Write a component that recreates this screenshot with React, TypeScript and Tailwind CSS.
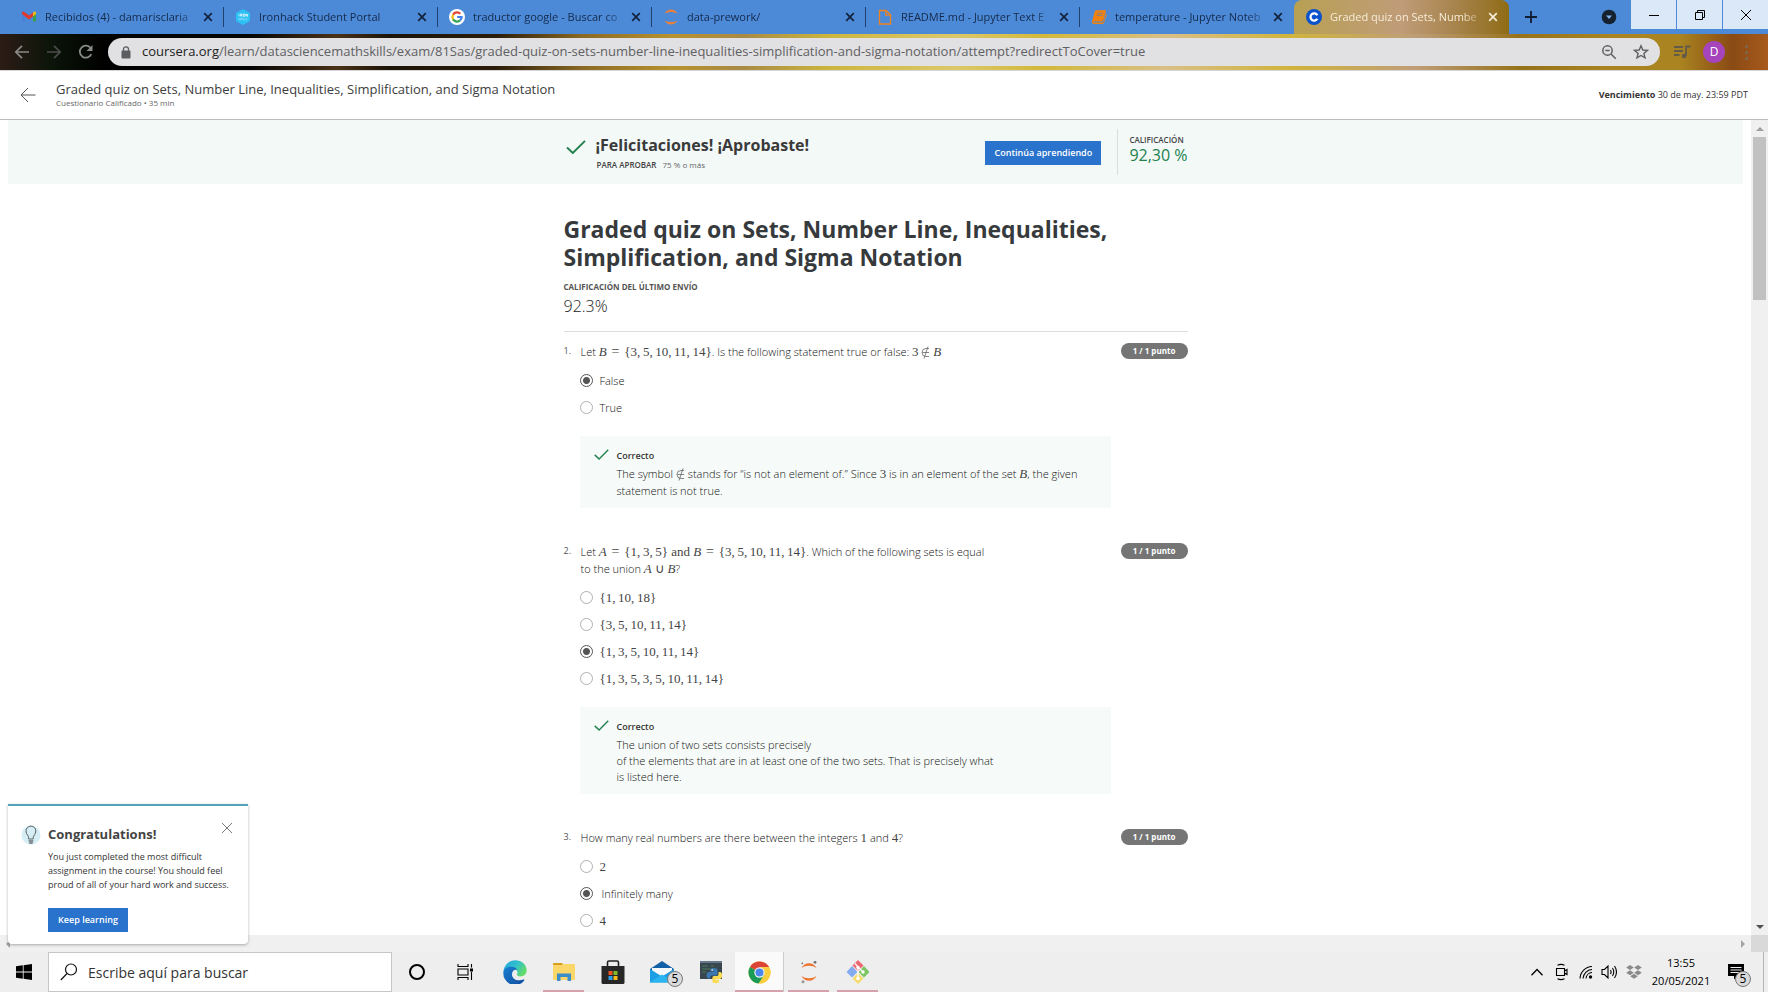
import React from "react";

type TabInfo = { title: string; icon: React.ReactNode };

const Close = ({ className = "" }: { className?: string }) => (
  <svg viewBox="0 0 10 10" className={className} fill="none" stroke="currentColor" strokeWidth="1.7" aria-hidden="true">
    <path d="M1.2 1.2l7.6 7.6M8.8 1.2L1.2 8.8" />
  </svg>
);

const GmailIcon = () => (
  <svg viewBox="0 0 16 16" className="size-4 shrink-0" aria-hidden="true">
    <path d="M1 4v8.5h3V7z" fill="#4a80d8" />
    <path d="M12 7v5.5h3V4z" fill="#37a04c" />
    <path d="M12 3.6l1.4-1q1.6-.4 1.6 1.4V5l-3 2.4z" fill="#f2bb18" />
    <path d="M1 5V3.8q.2-1.8 2-1L8 6.5l4-2.9v3.8l-4 3-4-3z" fill="#e0392f" />
  </svg>
);

const IronhackIcon = () => (
  <svg viewBox="0 0 16 16" className="size-4 shrink-0" aria-hidden="true">
    <path d="M8 0l7 4v8l-7 4-7-4V4z" fill="#2dc0f4" />
    <path d="M4 5v2.4M5.6 7.4V5h1.5v1.3H5.8l1.3 1.1M8.4 5h1.5v2.4H8.4zM11 7.4V5l1.4 2.4V5" stroke="#fff" strokeWidth=".7" fill="none" />
    <path d="M4 9v2.2M5.4 9v2.2M4 10.1h1.4M6.6 11.2V9h1.3v2.2M9 9v2.2h1.2M11.2 9v2.2M12.4 9l-1.2 1.1 1.2 1.1" stroke="#9be3fb" strokeWidth=".6" fill="none" />
  </svg>
);

const GoogleIcon = () => (
  <svg viewBox="0 0 16 16" className="size-4 shrink-0" aria-hidden="true">
    <circle cx="8" cy="8" r="8" fill="#fff" />
    <g fill="none" strokeWidth="2.2">
      <path d="M4.1 5.6A4.6 4.6 0 0 1 11.3 4.8" stroke="#e34133" />
      <path d="M4.1 10.4a4.7 4.7 0 0 1 0-4.8" stroke="#f5b912" />
      <path d="M11.2 11.3a4.6 4.6 0 0 1-7.1-.9" stroke="#32a350" />
      <path d="M8.2 8h4.4a4.6 4.6 0 0 1-1.4 3.3" stroke="#4081ec" />
    </g>
  </svg>
);

const JupyterTabIcon = () => (
  <svg viewBox="0 0 16 16" className="size-4 shrink-0" aria-hidden="true">
    <path d="M1.5 4.6Q4 .6 8 .6t6.500 4Q11.500 3 8 3T1.500 4.600z" fill="#e8803c" />
    <path d="M1.500 11.400Q4 15.400 8 15.400t6.500-4Q11.500 13 8 13t-6.500-1.600z" fill="#e8803c" />
  </svg>
);

const FileIcon = () => (
  <svg viewBox="0 0 16 16" className="size-4 shrink-0" fill="none" stroke="#f0831e" strokeWidth="1.300" aria-hidden="true">
    <path d="M2.500 1.500h6.500l4.500 4.300v9.200h-11z" />
    <path d="M8.800 1.500v4.600h4.700" />
  </svg>
);

const BookIcon = () => (
  <svg viewBox="0 0 16 16" className="size-4 shrink-0" aria-hidden="true">
    <path d="M5 1.200h9.200q1 .1.700 1.200l-2.600 9q-.3 1-1.300 1H3.200q-1 .2-.9 1h9.200q1 0 1.300-1l2.400-7.600q.6.500.4 1.400l-2.400 7.400q-.4 1.300-1.700 1.300H2.500Q.6 14.600 1 12.400L3.700 2.600Q4 1.300 5 1.200z" fill="#f2820f" />
    <path d="M6.300 4.300h5.600M5.700 6.400h5.600" stroke="#6f7f9c" strokeWidth=".8" />
  </svg>
);

const CourseraIcon = () => (
  <svg viewBox="0 0 16 16" className="size-4 shrink-0" aria-hidden="true">
    <circle cx="8" cy="8" r="8" fill="#0a53cc" />
    <path d="M11.300 9.700A3.600 3.600 0 1 1 11.300 6.300" fill="none" stroke="#fff" strokeWidth="2.300" />
  </svg>
);

const tabs: TabInfo[] = [
  { title: "Recibidos (4) - damarisclaria", icon: <GmailIcon /> },
  { title: "Ironhack Student Portal", icon: <IronhackIcon /> },
  { title: "traductor google - Buscar co", icon: <GoogleIcon /> },
  { title: "data-prework/", icon: <JupyterTabIcon /> },
  { title: "README.md - Jupyter Text E", icon: <FileIcon /> },
  { title: "temperature - Jupyter Noteb", icon: <BookIcon /> },
];

const TabTitle = ({ children }: { children: string }) => (
  <p className="text-[11px] leading-4 whitespace-nowrap [mask-image:linear-gradient(to_right,#000_132px,rgba(0,0,0,0.3)_148px)]">
    {children}
  </p>
);

const TabStrip = () => (
  <div className="flex h-[34px] bg-[#4c8ad8] pl-[10px] text-[#15294a]">
    {tabs.map((t, i) => (
      <div key={t.title} className="flex w-[214px] min-w-0 items-center pl-[11px]">
        {t.icon}
        <div className="ml-2 min-w-0 flex-1">
          <TabTitle>{t.title}</TabTitle>
        </div>
        <button aria-label="Cerrar pestaña" className="mr-[10px] ml-2 text-[#14233c]">
          <Close className="size-[10px]" />
        </button>
        <span className={i < 5 ? "h-5 w-px bg-[#20406e]" : "h-5 w-px"} />
      </div>
    ))}
    <div className="flex w-[215px] min-w-0 items-center rounded-t-lg bg-linear-to-r from-[#b8a052] via-[#c09c78] to-[#8f6c10] pl-3 text-[#f6ecd8]">
      <CourseraIcon />
      <div className="ml-2 min-w-0 flex-1">
        <TabTitle>Graded quiz on Sets, Numbe</TabTitle>
      </div>
      <button aria-label="Cerrar pestaña" className="mr-[11px] ml-2">
        <Close className="size-[10px]" />
      </button>
    </div>
    <button aria-label="Nueva pestaña" className="ml-4 text-[#101c30]">
      <svg viewBox="0 0 12 12" className="size-3" stroke="currentColor" strokeWidth="1.800" aria-hidden="true">
        <path d="M6 0v12M0 6h12" />
      </svg>
    </button>
    <button aria-label="Buscar pestañas" className="ml-auto mr-[14px]">
      <svg viewBox="0 0 16 16" className="size-4" aria-hidden="true">
        <circle cx="8" cy="8" r="7.300" fill="#15212f" />
        <path d="M5 6.500h6L8 10z" fill="#7fb0ea" />
      </svg>
    </button>
    <div className="flex h-[29px] gap-px text-black">
      <button aria-label="Minimizar" className="flex w-[45px] items-center justify-center bg-[#dbe8f7]">
        <svg viewBox="0 0 12 12" className="size-3" stroke="currentColor" aria-hidden="true"><path d="M1 6.500h10" /></svg>
      </button>
      <button aria-label="Restaurar" className="flex w-[45px] items-center justify-center bg-[#dbe8f7]">
        <svg viewBox="0 0 12 12" className="size-3" fill="none" stroke="currentColor" aria-hidden="true">
          <path d="M1.500 3.500h7v7h-7zM3.500 3.500v-2h7v7h-2" />
        </svg>
      </button>
      <button aria-label="Cerrar" className="flex w-[45px] items-center justify-center bg-[#dbe8f7]">
        <svg viewBox="0 0 12 12" className="size-3" stroke="currentColor" aria-hidden="true"><path d="M1 1l10 10M11 1L1 11" /></svg>
      </button>
    </div>
  </div>
);

const Toolbar = () => (
  <div className="flex h-[37px] items-center border-b border-[#d8d6d4] bg-[linear-gradient(90deg,#2c1c16_0%,#0a1408_3%,#000_6%,#030303_14%,#4a3218_19%,#1c1408_22%,#2a1c0a_28%,#8b6a24_33%,#b8922e_38%,#a88a44_42%,#cdb63e_47%,#dcc86a_54%,#d2b93a_59%,#d9bf86_66%,#d0b43c_73%,#bf9e78_80%,#96721a_86%,#a98420_91%,#a98420_95%,#8a4a14_98%,#a85a1c_100%)] text-[#8a8a88]">
    <button aria-label="Atrás" className="ml-[14px]">
      <svg viewBox="0 0 16 16" className="size-4" fill="none" stroke="currentColor" strokeWidth="1.700" aria-hidden="true">
        <path d="M15 8H2M8 1.800L1.800 8 8 14.200" />
      </svg>
    </button>
    <button aria-label="Adelante" className="ml-4 text-[#4c4c4c]">
      <svg viewBox="0 0 16 16" className="size-4" fill="none" stroke="currentColor" strokeWidth="1.700" aria-hidden="true">
        <path d="M1 8h13M8 1.800L14.200 8 8 14.200" />
      </svg>
    </button>
    <button aria-label="Recargar" className="ml-4">
      <svg viewBox="0 0 16 16" className="size-4" fill="none" stroke="currentColor" strokeWidth="1.800" aria-hidden="true">
        <path d="M13.300 10.200A6 6 0 1 1 12.600 4" />
        <path d="M14.500 1v6h-6z" fill="currentColor" stroke="none" />
      </svg>
    </button>
    <div className="ml-[14px] flex h-7 flex-1 items-center rounded-full bg-[#e1e0e2] pr-[11px] pl-[13px] text-[#5f6062]">
      <svg viewBox="0 0 10 13" className="h-[13px] w-[10px]" aria-hidden="true">
        <rect x=".5" y="4.500" width="9" height="8" rx="1" fill="#5c5d60" />
        <path d="M2.500 5V3.300a2.500 2.500 0 0 1 5 0V5" fill="none" stroke="#5c5d60" strokeWidth="1.300" />
      </svg>
      <p className="ml-[11px] flex-1 overflow-hidden text-[13px] whitespace-nowrap">
        <span className="text-[#222]">coursera.org</span>
        /learn/datasciencemathskills/exam/81Sas/graded-quiz-on-sets-number-line-inequalities-simplification-and-sigma-notation/attempt?redirectToCover=true
      </p>
      <button aria-label="Zoom">
        <svg viewBox="0 0 16 16" className="size-4" fill="none" stroke="currentColor" strokeWidth="1.500" aria-hidden="true">
          <circle cx="6.500" cy="6.500" r="4.700" />
          <path d="M10 10l4.800 4.800M4.300 6.500h4.400" />
        </svg>
      </button>
      <button aria-label="Añadir a marcadores" className="ml-4">
        <svg viewBox="0 0 16 16" className="size-4" fill="none" stroke="currentColor" strokeWidth="1.400" aria-hidden="true">
          <path d="M8 1.800l1.800 4.200 4.600.4-3.500 3 1.100 4.500L8 11.500l-4 2.400 1.100-4.500-3.500-3 4.600-.4z" />
        </svg>
      </button>
    </div>
    <button aria-label="Control multimedia" className="ml-[13px] text-[#635a48]">
      <svg viewBox="0 0 18 16" className="h-4 w-[18px]" fill="none" stroke="currentColor" strokeWidth="1.800" aria-hidden="true">
        <path d="M1 3h9M1 7h9M1 11h5.500M13 12V2.500h4.500" />
        <circle cx="11" cy="12" r="2.200" fill="currentColor" stroke="none" />
      </svg>
    </button>
    <button aria-label="Perfil" className="ml-3 flex size-[22px] items-center justify-center rounded-full bg-[#a544bb] text-[12px] text-white">
      D
    </button>
    <button aria-label="Menú" className="mr-5 ml-5 flex flex-col gap-[3px]">
      <span className="size-[3px] rounded-full bg-[#7a6a50]" />
      <span className="size-[3px] rounded-full bg-[#7a6a50]" />
      <span className="size-[3px] rounded-full bg-[#7a6a50]" />
    </button>
  </div>
);

const CourseHeader = () => (
  <header className="flex h-[49px] items-center border-b border-[#bcbcbc] bg-white pr-5 pl-5">
    <a href="#volver" aria-label="Volver" className="text-[#555]">
      <svg viewBox="0 0 16 16" className="size-4" fill="none" stroke="currentColor" strokeWidth="1" aria-hidden="true">
        <path d="M15.500 8H1M8 1L1 8l7 7" />
      </svg>
    </a>
    <div className="ml-5 flex-1 pb-px">
      <h2 className="text-[13px] leading-4 text-[#3d3d3d]">
        Graded quiz on Sets, Number Line, Inequalities, Simplification, and Sigma Notation
      </h2>
      <p className="text-[8px] leading-[11px] text-[#666]">Cuestionario Calificado • 35 min</p>
    </div>
    <p className="text-[9px] text-[#333]">
      <b className="font-bold">Vencimiento</b> 30 de may. 23:59 PDT
    </p>
  </header>
);

const Check = ({ className = "" }: { className?: string }) => (
  <svg viewBox="0 0 20 14" className={className} fill="none" stroke="#22814f" strokeWidth="1.900" aria-hidden="true">
    <path d="M1 7.500L6.800 13 19 .8" />
  </svg>
);

const Banner = () => (
  <section className="mx-2 flex h-16 justify-center bg-[#f3f9f7]">
    <div className="flex w-[624px] items-center">
      <Check className="mt-[-10px] ml-[2px] h-[14px] w-5" />
      <div className="ml-[10px] flex-1 pt-[2px]">
        <h2 className="text-[16px] leading-6 font-bold text-[#3a3a3a]">¡Felicitaciones! ¡Aprobaste!</h2>
        <p className="pl-px text-[8px] leading-4 text-[#666]">
          <b className="mr-1 font-semibold text-[#444]">PARA APROBAR</b> 75 % o más
        </p>
      </div>
      <button className="mt-[2px] h-6 w-[116px] bg-[#2a73cc] text-[9px] font-semibold text-white">Continúa aprendiendo</button>
      <div className="ml-4 flex h-[46px] flex-col justify-center border-l border-[#d9dedc] pb-[6px] pl-[11px]">
        <span className="text-[8px] leading-3 font-semibold text-[#444]">CALIFICACIÓN</span>
        <span className="text-[16px] leading-[18px] text-[#22814f]">92,30 %</span>
      </div>
    </div>
  </section>
);

const M = ({ children, it = false }: { children: React.ReactNode; it?: boolean }) => (
  <span className={it ? "font-['Liberation_Serif',serif] text-[13px] leading-none font-normal text-[#444] italic" : "font-['Liberation_Serif',serif] text-[13px] leading-none font-normal text-[#444]"}>
    {children}
  </span>
);

const Eq = () => <span className="mx-[2px] font-['Liberation_Serif',serif] text-[14px] leading-none font-normal text-[#444]">=</span>;

const NotIn = () => (
  <svg viewBox="0 0 9 13" className="inline h-[13px] w-[9px] align-[-3px]" fill="none" stroke="#666" strokeWidth=".8" role="img" aria-label="∉">
    <path d="M8 2.500H5A3.800 3.800 0 0 0 5 10.500h3M1.400 6.500H8M7 .5L3 12.500" />
  </svg>
);

const setOf = (...n: number[]) => "{" + n.join(",\u2009") + "}";

type Option = { label: React.ReactNode; checked?: boolean };

const Question = ({ n, text, options, children }: { n: number; text: React.ReactNode; options: Option[]; children?: React.ReactNode }) => (
  <li className="flex items-start">
    <span className="w-4 shrink-0 text-[9px] leading-4 text-[#555]">{n}.</span>
    <fieldset className="min-w-0 flex-1">
      <legend className="pl-px text-[11px] leading-[17px] font-light whitespace-nowrap text-[#111]">{text}</legend>
      <div className="mt-[7px] mb-[15px]">
        {options.map((o, i) => (
          <label key={i} className="flex h-[27px] items-center gap-[7px] text-[11px] font-light text-[#111]">
            <input
              type="radio"
              name={"q" + n}
              defaultChecked={o.checked}
              className="size-[13px] appearance-none rounded-full border border-[#b0b0b0] bg-white checked:border-[#555] checked:bg-[radial-gradient(circle,#555_3px,transparent_4px)]"
            />
            <span className="pt-px">{o.label}</span>
          </label>
        ))}
      </div>
      {children}
    </fieldset>
    <span className="ml-[10px] flex h-4 w-[67px] items-center justify-center rounded-full bg-[#757575] text-[8px] font-bold text-white">
      1 / 1 punto
    </span>
  </li>
);

const Feedback = ({ children, dense = false }: { children: React.ReactNode; dense?: boolean }) => (
  <div className="flex bg-[#f6fbf9] pt-3 pb-[9px] pl-[14px] whitespace-nowrap">
    <Check className="mt-px h-[11px] w-[15px] shrink-0" />
    <div className="ml-2 text-[#111]">
      <h3 className="text-[9px] leading-4 font-semibold text-[#333]">Correcto</h3>
      <p className={dense ? "mt-[2px] text-[11px] leading-4 font-light" : "mt-px text-[11px] leading-[17px] font-light"}>{children}</p>
    </div>
  </div>
);

const Quiz = () => (
  <main className="mx-auto w-[624px] pt-[31px]">
    <h1 className="text-[23px] leading-7 font-bold text-[#373a3c]">
      Graded quiz on Sets, Number Line, Inequalities, Simplification, and Sigma Notation
    </h1>
    <p className="mt-2 text-[8px] leading-4 font-bold text-[#555]">CALIFICACIÓN DEL ÚLTIMO ENVÍO</p>
    <p className="mt-px text-[16px] leading-5 font-light text-[#222]">92.3%</p>
    <hr className="mt-[15px] border-[#dedede]" />
    <ol className="mt-[11px] flex flex-col gap-[35px]">
      <Question
        n={1}
        text={
          <>
            Let <M it>B</M> <Eq /> <M>{setOf(3, 5, 10, 11, 14)}</M>. Is the following statement true or false: <M>3</M> <NotIn /> <M it>B</M>
          </>
        }
        options={[{ label: "False", checked: true }, { label: "True" }]}
      >
        <Feedback>
          The symbol <NotIn /> stands for “is not an element of.” Since <M>3</M> is in an element of the set <M it>B</M>, the given
          <br />
          statement is not true.
        </Feedback>
      </Question>
      <Question
        n={2}
        text={
          <>
            Let <M it>A</M> <Eq /> <M>{setOf(1, 3, 5)} and </M><M it>B</M> <Eq /> <M>{setOf(3, 5, 10, 11, 14)}</M>. Which of the following sets is equal
            <br />
            to the union <M it>A</M> <M>∪</M> <M it>B</M>?
          </>
        }
        options={[
          { label: <M>{setOf(1, 10, 18)}</M> },
          { label: <M>{setOf(3, 5, 10, 11, 14)}</M> },
          { label: <M>{setOf(1, 3, 5, 10, 11, 14)}</M>, checked: true },
          { label: <M>{setOf(1, 3, 5, 3, 5, 10, 11, 14)}</M> },
        ]}
      >
        <Feedback dense>
          The union of two sets consists precisely
          <br />
          of the elements that are in at least one of the two sets. That is precisely what
          <br />
          is listed here.
        </Feedback>
      </Question>
      <Question
        n={3}
        text={
          <>
            How many real numbers are there between the integers <M>1</M> and <M>4</M>?
          </>
        }
        options={[{ label: <M>2</M> }, { label: <span className="ml-[2px]">Infinitely many</span>, checked: true }, { label: <M>4</M> }]}
      />
    </ol>
  </main>
);

const Arrow = ({ d, className }: { d: string; className: string }) => (
  <svg viewBox="0 0 8 8" className={className} aria-hidden="true">
    <path d={d} fill="currentColor" />
  </svg>
);

const VScroll = () => (
  <div className="flex w-[17px] flex-col items-center bg-[#f0f0f0]">
    <div className="flex h-[17px] items-center text-[#a0a0a0]">
      <Arrow d="M0 6l4-4 4 4z" className="size-2" />
    </div>
    <div className="h-[20%] w-[13px] bg-[#c1c1c1]" />
    <div className="mt-auto flex h-[17px] items-center text-[#505050]">
      <Arrow d="M0 2l4 4 4-4z" className="size-2" />
    </div>
  </div>
);

const HScroll = () => (
  <div className="flex h-[17px] items-center bg-[#f0f0f0] text-[#a3a3a3]">
    <Arrow d="M6 0L2 4l4 4z" className="ml-1 size-2" />
    <Arrow d="M2 0l4 4-4 4z" className="mr-1 ml-auto size-2" />
    <span className="size-[17px] bg-[#d9d9d9]" />
  </div>
);

const Popup = () => (
  <aside className="absolute bottom-2 left-2 flex w-[240px] rounded-b-sm border-t-2 border-[#52a5bb] bg-white pt-[18px] pr-3 pb-3 pl-[13px] shadow-[0_1px_3px_rgba(0,0,0,0.3)]">
    <svg viewBox="0 0 20 20" className="mt-px size-5 shrink-0" fill="none" aria-hidden="true">
      <circle cx="10" cy="10" r="9.500" fill="#d5edf5" />
      <path d="M7.600 14v-1.500C7.600 10.500 5 9.500 5 6a4.900 4.900 0 0 1 9.800 0c0 3.500-2.600 4.500-2.600 6.500V14z" stroke="#4c5254" strokeWidth=".9" />
      <path d="M7.600 16h4.700M8.200 18h3.500" stroke="#333" strokeWidth="1.200" />
    </svg>
    <div className="ml-[7px]">
      <h2 className="text-[13px] leading-5 font-bold text-[#444]">Congratulations!</h2>
      <p className="mt-[6px] text-[9px] leading-[14px] whitespace-nowrap text-[#333]">
        You just completed the most difficult
        <br />
        assignment in the course! You should feel
        <br />
        proud of all of your hard work and success.
      </p>
      <button className="mt-4 h-6 w-20 bg-[#2a73cc] pb-px text-[9px] font-semibold text-white">Keep learning</button>
    </div>
    <button aria-label="Cerrar aviso" className="absolute top-[17px] right-4 text-[#555]">
      <svg viewBox="0 0 10 10" className="size-[10px]" stroke="currentColor" strokeWidth=".8" aria-hidden="true">
        <path d="M0 0l10 10M10 0L0 10" />
      </svg>
    </button>
  </aside>
);

const Badge = () => (
  <span className="absolute right-[3px] bottom-[5px] flex size-4 items-center justify-center rounded-full border border-[#777] bg-[#d9dbdc] text-[12px] leading-none text-black">
    5
  </span>
);

const AppButton = ({ label, line = "", active = false, children }: { label: string; line?: string; active?: boolean; children: React.ReactNode }) => (
  <button
    aria-label={label}
    className={active ? "relative flex w-[49px] items-center justify-center border-r border-[#ccc] bg-[#fafafa]" : "relative flex w-[49px] items-center justify-center"}
  >
    {children}
    {line && <span className={line} />}
  </button>
);

const Taskbar = () => (
  <footer className="flex h-10 bg-[#eeeeee] text-black">
    <button aria-label="Inicio" className="flex w-12 items-center justify-center">
      <svg viewBox="0 0 16 16" className="size-4" aria-hidden="true">
        <path d="M0 2.300l6.800-1v6.300H0zM7.600 1.200L16 0v7.600H7.600zM0 8.400h6.800v6.300L0 13.700zM7.600 8.400H16V16l-8.400-1.200z" />
      </svg>
    </button>
    <div className="flex w-[344px] items-center border border-[#c6c6c6] bg-white pl-[11px]">
      <svg viewBox="0 0 18 18" className="size-[18px]" fill="none" stroke="#111" strokeWidth="1.200" aria-hidden="true">
        <circle cx="11" cy="6.500" r="5.500" />
        <path d="M7 10.500L.8 17" />
      </svg>
      <input
        aria-label="Buscar"
        placeholder="Escribe aquí para buscar"
        className="ml-[10px] min-w-0 flex-1 text-[14px] outline-none placeholder:text-[#333]"
      />
    </div>
    <AppButton label="Cortana">
      <span className="size-4 rounded-full border-2 border-black" />
    </AppButton>
    <AppButton label="Vista de tareas">
      <svg viewBox="0 0 17 16" className="h-4 w-[17px]" fill="none" stroke="#000" strokeWidth="1.100" aria-hidden="true">
        <path d="M1 0v2.500h10V0M1 5h10v6H1zM1 16v-2.500h10V16M14.500 0v3.500M14.500 8v8" />
        <path d="M13 4.500h3v3h-3z" fill="#000" stroke="none" />
      </svg>
    </AppButton>
    <AppButton label="Edge">
      <svg viewBox="0 0 24 24" className="size-6" aria-hidden="true">
        <defs>
          <linearGradient id="edgeTop" x1="0" y1="0" x2="1" y2=".5">
            <stop offset="0" stopColor="#2aa5dd" />
            <stop offset=".55" stopColor="#30bfcf" />
            <stop offset="1" stopColor="#62dc6a" />
          </linearGradient>
          <linearGradient id="edgeLow" x1="0" y1="0" x2="1" y2="1">
            <stop offset="0" stopColor="#1b80d2" />
            <stop offset="1" stopColor="#0f4a9c" />
          </linearGradient>
        </defs>
        <path d="M.5 11.500C1 5 6 .3 12 .3c7 0 11.700 5 11.700 9.900 0 3.900-2.900 6.200-6.200 6.200-2.800 0-4-1-3.500-2 1-1.500.8-5.200-3.700-6C5.500 7.500 1.500 9 .5 11.500z" fill="url(#edgeTop)" />
        <path d="M.4 12c.6-4 4.800-6 9-5.200 2.400.4 4 1.500 4.600 3.200-3-.8-5 1.500-5 4.400 0 4.300 5 7.500 11.500 5.200.8-.3 1.200.3.800.9A11.700 11.700 0 0 1 .4 12z" fill="url(#edgeLow)" />
      </svg>
    </AppButton>
    <AppButton label="Explorador de archivos" line="absolute inset-x-1 bottom-0 h-[2px] bg-[#d3a2ad]">
      <svg viewBox="0 0 22 20" className="h-5 w-[22px]" aria-hidden="true">
        <path d="M0 2q0-1 1-1h8l1.500 2H0z" fill="#d89e1e" />
        <path d="M0 3h9l1-1h11q1 0 1 1v15H0z" fill="#fbd669" />
        <path d="M4 11.500h14v7.500h-3.500v-4h-7v4H4z" fill="#3d8dcb" />
      </svg>
    </AppButton>
    <AppButton label="Microsoft Store">
      <svg viewBox="0 0 24 24" className="size-6" aria-hidden="true">
        <path d="M6.500 6V2.500q0-1.500 1.500-1.500h8q1.500 0 1.500 1.500V6" fill="none" stroke="#202020" strokeWidth="1.600" />
        <path d="M.5 6h23v16.500q0 1.500-1.500 1.500H2q-1.500 0-1.500-1.500z" fill="#272727" />
        <path d="M7.500 11h4v4h-4z" fill="#f05223" />
        <path d="M12.500 11h4v4h-4z" fill="#80ba28" />
        <path d="M7.500 16h4v4h-4z" fill="#2ba0e8" />
        <path d="M12.500 16h4v4h-4z" fill="#fab917" />
      </svg>
    </AppButton>
    <AppButton label="Correo">
      <svg viewBox="0 0 24 24" className="size-6" aria-hidden="true">
        <path d="M0 9L12 1l12 8v5H0z" fill="#1260a8" />
        <path d="M2 8h20v5l-10 5-10-5z" fill="#f6f9fb" />
        <path d="M0 9l12 7.500L24 9v13.500H0z" fill="#1a9fe4" />
        <path d="M0 22.500l12-8 12 8z" fill="#2ab5f0" />
      </svg>
      <Badge />
    </AppButton>
    <AppButton label="IDLE">
      <svg viewBox="0 0 24 24" className="size-6" aria-hidden="true">
        <path d="M1 1h22v18H1z" fill="#38474f" />
        <path d="M1 1h22v2H1z" fill="#66798a" />
        <path d="M3 6h6M3 9h9M3 12h4M12 6h3" stroke="#4d7a58" strokeWidth="1" />
        <path d="M11.500 9.500q0-1.500 3.500-1.500t3.500 1.800V14q0 1.500-1.500 1.500h-4q-2 0-2 3h-2q-1.500-.8-1.500-3.500t2-3h5v-.7h-3.500z" fill="#3b78b2" />
        <path d="M19.500 12h2q1.700.5 1.700 3.500T21 19h-4.500v.7H20v1.800q0 1.700-3.300 1.700t-3.300-1.700v-4q0-1.500 1.600-1.500h3q1.500 0 1.500-2z" fill="#fbdb51" />
        <circle cx="13.200" cy="10" r=".8" fill="#fff" />
      </svg>
    </AppButton>
    <AppButton label="Chrome" line="absolute inset-x-0 bottom-0 h-[2px] bg-[#d3a2ad]" active>
      <svg viewBox="0 0 24 24" className="size-[23px]" aria-hidden="true">
        <circle cx="12" cy="12" r="11.500" fill="#fbce3e" />
        <path d="M12 12L2.040 6.250A11.500 11.500 0 0 1 21.960 6.250z" fill="#dc4437" />
        <path d="M12 12L2.040 6.250A11.500 11.500 0 0 0 11 23.450L17 14.500z" fill="#1b9b57" />
        <path d="M12 6.250h9.960A11.500 11.500 0 0 1 12 23.500l5-8.600z" fill="#fbce3e" />
        <circle cx="12" cy="12" r="5.400" fill="#f4f4f4" />
        <circle cx="12" cy="12" r="4.200" fill="#4a86ec" />
      </svg>
    </AppButton>
    <AppButton label="Jupyter" line="absolute inset-x-1 bottom-0 h-[2px] bg-[#d3a2ad]">
      <svg viewBox="0 0 20 24" className="h-6 w-5" aria-hidden="true">
        <path d="M2.500 8Q5 3.200 10 3.200T17.500 8Q14.500 5.800 10 5.800T2.500 8z" fill="#ee7630" />
        <path d="M2.500 16Q5 20.800 10 20.800t7.500-4.800q-3 2.200-7.500 2.200T2.500 16z" fill="#ee7630" />
        <circle cx="16" cy="2.300" r="1.400" fill="#6f7071" />
        <circle cx="3.300" cy="3.300" r=".9" fill="#6f7071" />
        <circle cx="4" cy="21.800" r="1.500" fill="#979797" />
      </svg>
    </AppButton>
    <AppButton label="Git Bash" line="absolute inset-x-1 bottom-0 h-[2px] bg-[#d3a2ad]">
      <svg viewBox="0 0 24 24" className="size-6" aria-hidden="true">
        <path d="M12 0l5.500 5.500L12 11 6.500 5.500z" fill="#ec6a72" />
        <path d="M6 6l5.500 6L6 17.500.5 12z" fill="#84abf0" />
        <path d="M18 6l5.500 6-5.500 5.500L12.500 12z" fill="#7cc564" />
        <path d="M12 13l5.500 5.500L12 24l-5.500-5.500z" fill="#f5dc70" />
        <path d="M9 3.500l3 3.500v12M12 7l5 5" stroke="#fff" strokeWidth="1.200" fill="none" />
        <circle cx="12" cy="7.500" r="1.700" fill="#fff" />
        <circle cx="17" cy="12" r="1.700" fill="#fff" />
        <circle cx="12" cy="18.500" r="1.700" fill="#fff" />
      </svg>
    </AppButton>
    <div className="mr-1 ml-auto flex items-center">
      <svg viewBox="0 0 12 8" className="h-2 w-3" fill="none" stroke="#000" strokeWidth="1.300" aria-hidden="true">
        <path d="M.5 7.200L6 1.500l5.500 5.700" />
      </svg>
      <svg viewBox="0 0 14 18" className="ml-3 h-[18px] w-[14px]" fill="none" stroke="#000" strokeWidth="1.100" aria-hidden="true">
        <path d="M1.500 5.500h8v7h-8zM9.500 8l2.500-1.500v5L9.500 10M2.500 2.200Q6 .5 9.500 2.200M2.500 15.800q3.500 1.700 7 0" />
      </svg>
      <svg viewBox="0 0 14 14" className="ml-[10px] size-[14px]" fill="none" stroke="#000" strokeWidth="1.100" aria-hidden="true">
        <path d="M1 13.500A12.500 12.500 0 0 1 13 1.500M4 13.500a9.500 9.500 0 0 1 9-9M7 13.500a6.500 6.500 0 0 1 6-6" />
        <circle cx="11.500" cy="12" r="1.700" fill="#000" stroke="none" />
      </svg>
      <svg viewBox="0 0 18 16" className="ml-2 h-4 w-[18px]" fill="none" stroke="#000" strokeWidth="1.100" aria-hidden="true">
        <path d="M1 5.500h2.500L7 2v12l-3.500-3.500H1zM9.500 6q1.200 2 0 4M11.500 4q2.500 4 0 8M13.500 2q4 6 0 12" />
      </svg>
      <svg viewBox="0 0 16 14" className="ml-[7px] h-[14px] w-4" fill="#8a8a8a" aria-hidden="true">
        <path d="M4 0l3.800 2.500L4 5 .2 2.500zM12 0l3.800 2.500L12 5 8.200 2.500zM4 5.200l3.800 2.500L4 10.200.2 7.700zM12 5.200l3.800 2.500-3.800 2.500-3.800-2.500zM8 8.800l3.800 2.500L8 13.800l-3.800-2.500z" />
      </svg>
      <p className="ml-2 w-[62px] text-center text-[11px] leading-[18px]">
        13:55
        <br />
        20/05/2021
      </p>
      <button aria-label="Notificaciones" className="relative ml-[14px] flex h-10 w-[38px] border-r border-[#b5b5b5] pt-3 pl-[2px]">
        <svg viewBox="0 0 16 16" className="size-4" aria-hidden="true">
          <path d="M0 0h16v12H9l-3 3.500V12H0z" />
          <path d="M2.500 3.500h11M2.500 6h11M2.500 8.500h11" stroke="#eee" />
        </svg>
        <span className="absolute top-[19px] left-[9px] flex size-4 items-center justify-center rounded-full border border-[#777] bg-[#d9d9d9] text-[12px] leading-none">
          5
        </span>
      </button>
    </div>
  </footer>
);

export default function App() {
  return (
    <div className="flex h-screen flex-col overflow-hidden bg-white font-['Open_Sans','Noto_Sans',sans-serif]">
      <TabStrip />
      <Toolbar />
      <CourseHeader />
      <div className="relative flex min-h-0 flex-1 flex-col">
        <div className="flex min-h-0 flex-1">
          <div className="min-w-0 flex-1 overflow-hidden">
            <Banner />
            <Quiz />
          </div>
          <VScroll />
        </div>
        <HScroll />
        <Popup />
      </div>
      <Taskbar />
    </div>
  );
}
